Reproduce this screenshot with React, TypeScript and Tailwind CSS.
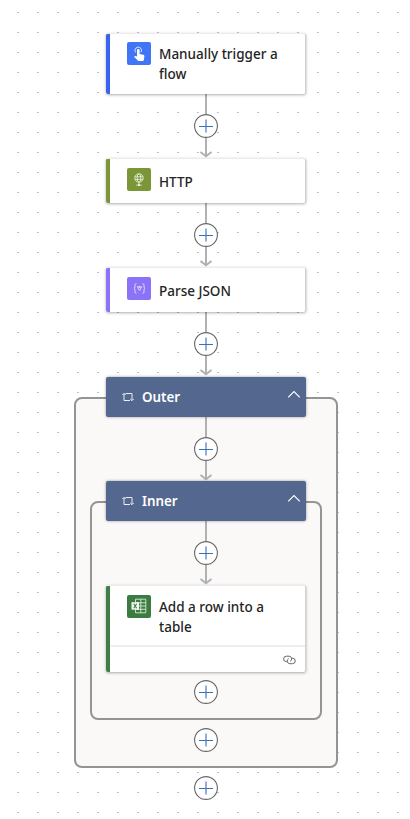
import type { ReactNode } from "react";

function Plus() {
  return (
    <svg width="24" height="24" viewBox="0 0 24 24" className="relative block shrink-0">
      <circle cx="12" cy="12" r="11.4" fill="#fff" stroke="#666" strokeWidth="1.1" />
      <path d="M12 5.5v13" stroke="#93add9" strokeWidth="2" />
      <path d="M5 12.5h14" stroke="#3b6fb8" strokeWidth="1" />
    </svg>
  );
}

function Connector() {
  return (
    <div className="flex h-16 flex-col items-center">
      <div className="h-5 w-0.5 shrink-0 bg-[#b1b1b3]" />
      <Plus />
      <svg width="14" height="20" viewBox="0 0 14 20" className="block shrink-0" fill="none" stroke="#b1b1b3" strokeWidth="2">
        <path d="M7 0v18M1.5 14L7 18.3 12.5 14" />
      </svg>
    </div>
  );
}

interface CardProps {
  bar: string;
  tile: string;
  height: string;
  icon: ReactNode;
  title: string;
  bodyPad?: string;
  titlePad?: string;
  children?: ReactNode;
}

function Card({ bar, tile, height, icon, title, bodyPad = "pt-[9px]", titlePad = "pt-[2px]", children }: CardProps) {
  return (
    <div className={`relative flex w-[200px] shrink-0 overflow-hidden rounded-[2px] border-t border-r border-t-[#ececec] border-r-[#d0d0d0] bg-white shadow-[0_1px_3px_rgba(0,0,0,0.32)] ${height}`}>
      <div className={`w-1 shrink-0 ${bar}`} />
      <div className="flex flex-1 flex-col">
        <div className={`flex flex-1 pl-[17px] ${bodyPad}`}>
          <div className={`flex h-[23px] w-6 shrink-0 items-center justify-center rounded-[2px] ${tile}`}>{icon}</div>
          <div className={`w-[134px] shrink-0 pl-2 text-[13.5px] leading-5 font-medium text-[#242424] ${titlePad}`}>{title}</div>
        </div>
        {children}
      </div>
    </div>
  );
}

function ScopeHeader({ title }: { title: string }) {
  return (
    <div className="relative z-10 flex h-10 w-[200px] shrink-0 items-center rounded-[2px] bg-[#54688f] pr-[5px] pl-4 text-white shadow-[0_0_3px_rgba(0,0,0,0.4)]">
      <svg width="12" height="10" viewBox="0 0 12 10" fill="none" stroke="#e9edf4" strokeWidth="1">
        <path d="M4.2 8.5H2V1.8M0.3 3L2 1.3 3.7 3M3.6 1.5H10v6.7M8.3 7L10 8.7 11.7 7M2 8.5h6" />
      </svg>
      <span className="ml-2 flex-1 pt-[2px] text-[13.4px] font-semibold">{title}</span>
      <svg width="14" height="9" viewBox="0 0 14 9" className="-mt-1" fill="none" stroke="#fff" strokeWidth="1.2">
        <path d="M1.2 7.4L7 1.5l5.8 5.9" />
      </svg>
    </div>
  );
}

const tap = (
  <svg width="14" height="16" viewBox="0 0 14 16">
    <path d="M3.6 6.4A3.3 3.3 0 1 1 9 6.2" fill="none" stroke="#d5e2ff" strokeWidth="1" />
    <path d="M5 4.2a1.3 1.3 0 0 1 2.6 0v3.9l3.6.7q1.4.3 1.2 1.7l-.6 3.5q-.1.9-1 .9H6.9q-.6 0-1-.5L2 10.8q.9-1.1 2.2-.6l.8.4z" fill="#fff" />
  </svg>
);

const globe = (
  <svg width="12" height="14" viewBox="0 0 12 14" fill="none" stroke="#eef4df" strokeWidth="0.8">
    <circle cx="6" cy="5" r="4.2" />
    <ellipse cx="6" cy="5" rx="1.8" ry="4.2" />
    <path d="M1.8 3.8h8.4M1.8 6.4h8.4M6 9.2v3M3.2 12.1h5.6" />
    <path d="M5 12.1h2" strokeWidth="1.7" />
  </svg>
);

const json = (
  <svg width="13" height="11" viewBox="0 0 14 12" fill="none" stroke="#eee8ff" strokeWidth="0.9">
    <path d="M3.8.8h-.5q-1.2 0-1.2 1.2v2.3Q2.1 5.8.9 6q1.2.2 1.2 1.7V10q0 1.2 1.2 1.2h.5M10.2.8h.5q1.2 0 1.2 1.2v2.3q0 1.5 1.2 1.7-1.2.2-1.2 1.7V10q0 1.2-1.2 1.2h-.5" />
    <path d="M4.7 4h4.6L7.5 7.8h-1zM6 5h2" />
  </svg>
);

const excel = (
  <svg width="16" height="16" viewBox="0 0 16 16" fill="none">
    <path d="M4.5 4V1.2h10.3v13.6H4.5V12M9.8 1.2v13.6M4.5 4.8h10.3M7 8h7.8M4.5 11.3h10.3" stroke="#d8ead8" strokeWidth="0.9" />
    <rect x="0.5" y="4.2" width="7.5" height="7.5" fill="#f4faf4" />
    <path d="M2.7 5.8l3 4.4M5.7 5.8l-3 4.4" stroke="#3c7c43" strokeWidth="1.1" />
  </svg>
);

export default function App() {
  return (
    <div className="h-[819px] w-full overflow-hidden bg-white bg-[conic-gradient(from_90deg_at_18px_19px,#c0c0c0_25%,transparent_0)] bg-[length:20px_20px] bg-[position:-1px_-7px] font-['Noto_Sans',sans-serif]">
      <main className="flex w-[412px] flex-col items-center pt-[33px]">
        <Card bar="bg-[#3865f0]" tile="bg-[#4075f5]" height="h-[61px]" icon={tap} title="Manually trigger a flow" bodyPad="pt-2" />
        <Connector />
        <Card bar="bg-[#7b9637]" tile="bg-[#7b9637]" height="h-[45px]" icon={globe} title="HTTP" titlePad="pt-1" />
        <Connector />
        <Card bar="bg-[#8b72f7]" tile="bg-[#8b72f7]" height="h-[45px]" icon={json} title="Parse JSON" titlePad="pt-1" />
        <Connector />
        <div className="h-[0.5px] shrink-0" />
        <ScopeHeader title="Outer" />
        <section className="-mt-5 flex h-[371.5px] w-[264px] shrink-0 flex-col items-center rounded-lg border-2 border-[#949494] bg-[#faf9f8] pt-[18px]">
          <Connector />
          <ScopeHeader title="Inner" />
          <section className="-mt-5 flex h-[219.5px] w-[232px] shrink-0 flex-col items-center rounded-lg border-2 border-[#949494] pt-[18px]">
            <Connector />
            <Card bar="bg-[#3f7e46]" tile="bg-[#3c7c43]" height="h-[87.5px]" icon={excel} title="Add a row into a table">
              <div className="flex h-[27px] items-center justify-end border-t-2 border-[#eeeeee] pr-[9px]">
                <svg width="13" height="10" viewBox="0 0 13 10" fill="none" stroke="#666" strokeWidth="1">
                  <path d="M4.3 6.7H3.4a2.7 2.7 0 0 1 0-5.5h2.7a2.7 2.7 0 0 1 1.1 5.1" />
                  <path d="M8.5 3.2h1a2.7 2.7 0 0 1 0 5.5H6.8a2.7 2.7 0 0 1-1.1-5.1" />
                </svg>
              </div>
            </Card>
            <div className="mt-2"><Plus /></div>
          </section>
          <div className="mt-2"><Plus /></div>
        </section>
        <div className="mt-2"><Plus /></div>
      </main>
    </div>
  );
}
